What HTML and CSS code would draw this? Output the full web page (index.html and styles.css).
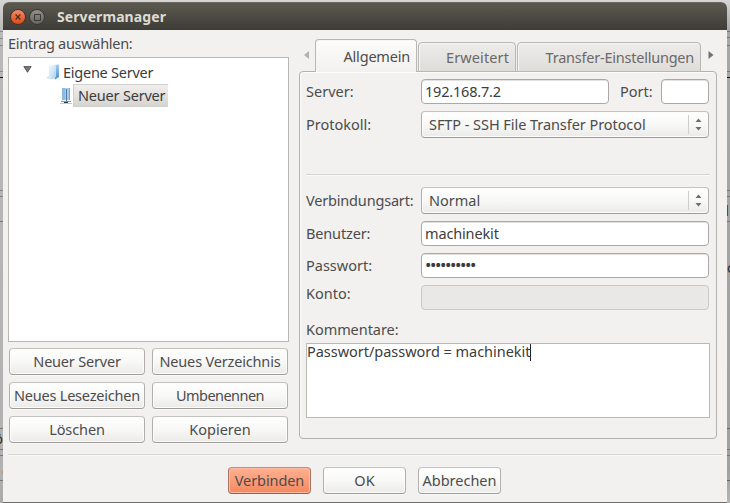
FILE: index.html
```html
<!DOCTYPE html>
<html lang="de">
<head>
<meta charset="utf-8">
<title>Servermanager</title>
<link rel="stylesheet" href="styles.css">
</head>
<body>
<div class="desktop">
  <div class="edge edge-left"><span class="peek peek-o">ö</span></div>
  <section class="window">
    <header class="titlebar">
      <svg class="winbtn" width="16" height="16" viewBox="0 0 16 16">
        <defs><linearGradient id="close" x2="0" y2="1"><stop stop-color="#f58d68"/><stop offset="1" stop-color="#dd4715"/></linearGradient></defs>
        <circle cx="8" cy="8" r="7.5" fill="url(#close)" stroke="#37352f" stroke-width="1"/>
        <path d="M5.6 5.6l4.8 4.8M10.4 5.6l-4.8 4.8" stroke="#50301f" stroke-width="1.4"/>
      </svg>
      <svg class="winbtn" width="16" height="16" viewBox="0 0 16 16">
        <defs><linearGradient id="max" x2="0" y2="1"><stop stop-color="#92908a"/><stop offset="1" stop-color="#66645d"/></linearGradient></defs>
        <circle cx="8" cy="8" r="7.5" fill="url(#max)" stroke="#37352f" stroke-width="1"/>
        <path d="M5.5 5.5h6v6h-6z" fill="none" stroke="#3c3b37"/>
      </svg>
      <h1 class="title">Servermanager</h1>
    </header>
    <main class="content">
      <div class="left">
        <div class="heading">Eintrag auswählen:</div>
        <div class="tree">
          <div class="row">
            <svg class="twist" width="9" height="7" viewBox="0 0 9 7"><path d="M.8.5h7.4L4.5 6.3z" fill="#777" stroke="#4a4a4a" stroke-width=".8"/></svg>
            <svg class="folder" width="14" height="16" viewBox="0 0 14 16">
              <defs><linearGradient id="fold" x2="1" y2="1"><stop stop-color="#f4faff"/><stop offset="1" stop-color="#a9d0ef"/></linearGradient>
              <linearGradient id="side" x2="0" y2="1"><stop stop-color="#a5cdf0"/><stop offset="1" stop-color="#4b8fce"/></linearGradient></defs>
              <path d="M0 14l3-2.500V2.500L7 1v13l-4 1z" fill="#d8e6f0"/>
              <path d="M8 1l5-.5V13l-4 2.500z" fill="url(#side)"/>
              <path d="M3.500 2.500L10 1v11.500L8 15H3.500z" fill="url(#fold)"/>
            </svg>
            <span class="t-own">Eigene Server</span>
          </div>
          <div class="row child">
            <svg class="server" width="12" height="17" viewBox="0 0 12 17">
              <path d="M2 1h8v12H2z" fill="#a9caea"/><path d="M2 1h3v12H2z" fill="#8db8e0"/><path d="M9 1h1v12H9z" fill="#7ca6cf"/>
              <path d="M6.500 2v12" stroke="#4b7bab"/><path d="M1 14.500h10" stroke="#7c98b4"/><path d="M4 15.500h4" stroke="#293d52"/><path d="M0 16.500h12" stroke="#b9cada"/>
            </svg>
            <span class="selected"><span class="t-new">Neuer Server</span></span>
          </div>
        </div>
        <div class="actions">
          <button class="btn t-new">Neuer Server</button>
          <button class="btn t-dir">Neues Verzeichnis</button>
          <button class="btn t-mark">Neues Lesezeichen</button>
          <button class="btn t-ren">Umbenennen</button>
          <button class="btn t-del">Löschen</button>
          <button class="btn">Kopieren</button>
        </div>
      </div>
      <div class="right">
        <nav class="tabs">
          <svg class="scroll" width="5" height="8" viewBox="0 0 5 8"><path d="M5 0v8L0 4z" fill="#b3b1ae"/></svg>
          <div class="tab active"><span class="t-gen">Allgemein</span></div>
          <div class="tab tab-adv"><span class="t-adv">Erweitert</span></div>
          <div class="tab tab-tra"><span class="t-tra">Transfer-Einstellungen</span></div>
          <svg class="scroll next" width="6" height="8" viewBox="0 0 6 8"><path d="M.5 0v8L5.500 4z" fill="#73716e"/></svg>
        </nav>
        <div class="panel">
          <div class="field h25">
            <label>Server:</label><div class="entry host"><span class="t-ip">192.168.7.2</span></div>
            <label class="portlabel">Port:</label><div class="entry port"></div>
          </div>
          <div class="field h27">
            <label>Protokoll:</label>
            <div class="combo"><span class="t-sftp">SFTP - SSH File Transfer Protocol</span><svg class="updown" width="20" height="19" viewBox="0 0 20 19"><path d="M.5 0v19" stroke="#d0cecb"/><path d="M7.500 7h6l-3-3.500zM7.500 12h6l-3 3.500z" fill="#6f6e6b"/></svg></div>
          </div>
          <div class="rule"></div>
          <div class="field h27">
            <label class="t-kind">Verbindungsart:</label>
            <div class="combo"><span>Normal</span><svg class="updown" width="20" height="19" viewBox="0 0 20 19"><path d="M.5 0v19" stroke="#d0cecb"/><path d="M7.500 7h6l-3-3.500zM7.500 12h6l-3 3.500z" fill="#6f6e6b"/></svg></div>
          </div>
          <div class="field h25"><label class="t-user">Benutzer:</label><div class="entry"><span class="t-mk">machinekit</span></div></div>
          <div class="field h25"><label>Passwort:</label><div class="entry"><span class="dots">••••••••••</span></div></div>
          <div class="field h25"><label class="account">Konto:</label><div class="entry disabled"></div></div>
          <div class="comlabel">Kommentare:</div>
          <div class="comment"><span class="t-note">Passwort/password = machinekit</span><i class="caret"></i></div>
        </div>
      </div>
    </main>
    <footer class="footer">
      <button class="btn primary t-conn">Verbinden</button>
      <button class="btn">OK</button>
      <button class="btn">Abbrechen</button>
    </footer>
  </section>
  <div class="edge edge-right"><span class="peek peek-d">d</span><span class="peek peek-c">o</span></div>
</div>
</body>
</html>
```
FILE: styles.css
```css
* { box-sizing: border-box; }
body { margin: 0; font: 14.5px/18px "Noto Sans", "Open Sans", sans-serif; color: #4c4c4c; white-space: nowrap; }
svg { display: block; flex: none; }
.desktop { display: flex; width: 730px; height: 503px; overflow: hidden; background: linear-gradient(#d5d5d5, #a8a8a8 30px, #999 470px, #6f6e6c 502px); }
.edge { position: relative; width: 3px; height: 503px; overflow: hidden; flex: none; }
.edge-left { background:
  linear-gradient(#898989, #898989) 0 31px / 3px 1px no-repeat,
  linear-gradient(#898989, #898989) 0 38px / 3px 1px no-repeat,
  linear-gradient(#898989, #898989) 0 45px / 3px 1px no-repeat,
  linear-gradient(#898989, #898989) 0 71px / 3px 1px no-repeat,
  linear-gradient(#111, #111) 0 77px / 3px 1px no-repeat,
  linear-gradient(#858585, #858585) 0 190px / 3px 1px no-repeat,
  linear-gradient(#858585, #858585) 0 196px / 3px 1px no-repeat,
  linear-gradient(#777, #777) 0 221px / 3px 1px no-repeat,
  linear-gradient(#777, #777) 0 428px / 3px 1px no-repeat,
  linear-gradient(#777, #777) 0 449px / 3px 1px no-repeat,
  linear-gradient(#777, #777) 0 455px / 3px 1px no-repeat,
  linear-gradient(#c39a4a, #c39a4a) 2px 471px / 1px 3px no-repeat,
  linear-gradient(#777, #777) 0 480px / 3px 1px no-repeat,
  linear-gradient(#d5d5d5, #b9b9b9 30px, #b1b1b1 470px, #aaa); }
.edge-right { background:
  linear-gradient(#777, #777) 0 31px / 3px 1px no-repeat,
  linear-gradient(#777, #777) 0 37px / 3px 1px no-repeat,
  linear-gradient(#777, #777) 0 45px / 3px 1px no-repeat,
  linear-gradient(#777, #777) 0 71px / 3px 1px no-repeat,
  linear-gradient(#111, #111) 0 77px / 3px 1px no-repeat,
  linear-gradient(#777, #777) 0 190px / 3px 1px no-repeat,
  linear-gradient(#777, #777) 0 196px / 3px 1px no-repeat,
  linear-gradient(#777, #777) 0 221px / 3px 1px no-repeat,
  linear-gradient(#666, #666) 0 428px / 3px 1px no-repeat,
  linear-gradient(#777, #777) 0 449px / 3px 1px no-repeat,
  linear-gradient(#777, #777) 0 455px / 3px 1px no-repeat,
  linear-gradient(#666, #666) 0 480px / 3px 1px no-repeat,
  linear-gradient(#d5d5d5, #a7a7a7 30px, #a0a0a0 470px, #b5b5b5); }
.peek { position: absolute; color: #333; }
.peek-o { right: 0; top: 429px; }
.peek-d { right: 1px; top: 201px; }
.peek-c { left: 0; top: 258px; }
.window { width: 724px; height: 500px; margin-top: 2px; background: #f2f1f0; border-radius: 6px 6px 0 0; display: flex; flex-direction: column; overflow: hidden; }
.titlebar { height: 28px; padding: 1px 0 0 7px; display: flex; align-items: center; background: linear-gradient(#5b594f, #3d3c37); border-top: 1px solid #6a685d; }
.winbtn { margin-right: 3px; }
.title { margin: 0 0 0 9px; font-size: 14px; line-height: 20px; font-weight: 700; letter-spacing: .08px; color: #dfdbd2; }
.content { display: flex; height: 424px; padding: 4px 10px 0 5px; }
.left { width: 281px; }
.heading { height: 23px; letter-spacing: -.3px; }
.tree { height: 285px; border: 1px solid #b9b7b3; background: #fff; padding: 2px 0 0 14px; color: #3c3c3c; }
.row { display: flex; height: 23px; align-items: center; }
.row + .row { margin-top: 1px; }
.twist { margin: -5px 14px 0 0; }
.folder { margin-right: 3px; }
.child { padding-left: 37px; }
.selected { margin-left: 1px; width: 95px; height: 23px; padding: 1px 0 0 4px; border: 1px solid #d2d0cd; border-right: 0; background: linear-gradient(#f0efee, #d6d4d1); }
.actions { display: grid; grid-template-columns: 136px 136px; gap: 7px; padding: 6px 1px 0; }
.btn { height: 27px; padding: 0 0 1px; font-family: inherit; font-size: inherit; line-height: 18px; color: #4c4c4c; border: 1px solid; border-color: #c5c3c0 #b1afac #9e9c99 #b1afac; border-radius: 4px; background: linear-gradient(#fff, #f8f8f7 50%, #ebeae8); box-shadow: inset 0 0 0 1px #fcfcfb, 0 1px #f9f9f8; white-space: nowrap; }
.right { width: 418px; margin-left: 10px; }
.tabs { position: relative; z-index: 1; display: flex; align-items: flex-end; height: 38px; padding-left: 5px; margin-bottom: -1px; }
.scroll { margin-bottom: 13px; }
.next { margin-left: 7px; }
.tab { height: 30px; border: 1px solid #b9b7b3; border-radius: 4px 4px 0 0; background: linear-gradient(#edecea, #dfddda); color: #6b6967; text-align: right; padding: 5px 6px 0 0; box-shadow: inset 1px 1px #f7f6f5; }
.active { width: 102px; height: 33px; margin-left: 6px; border-bottom: 0; background: linear-gradient(#fcfcfb, #f2f1f0); color: #4c4c4c; padding-top: 7px; }
.tab-adv { width: 98px; margin-left: 1px; }
.tab-tra { width: 184px; margin-left: 1px; }
.panel { height: 368px; border: 1px solid #b3b1ae; border-radius: 4px; padding: 7px 6px 0; box-shadow: inset 1px 1px #fbfbfa; }
.field { display: flex; align-items: center; padding: 0 1px 0 0; }
.field label { padding-bottom: 2px; }
.field label:first-child { width: 115px; flex: none; }
.h25 { height: 25px; margin-bottom: 7px; }
.h27 { height: 27px; margin-bottom: 7px; }
.entry { flex: 1; height: 25px; border: 1px solid #aaa8a5; border-radius: 4px; background: #fff; box-shadow: inset 0 1px #e3e2e0; padding: 2px 3px 0; color: #3c3c3c; }
.host { flex: none; width: 188px; }
.portlabel { width: 41px; margin-left: 11px; }
.disabled { background: #e9e8e7; border-color: #cbc9c6; box-shadow: none; }
.combo { flex: 1; height: 27px; display: flex; align-items: center; justify-content: space-between; padding-left: 7px; border: 1px solid; border-color: #c5c3c0 #b1afac #9e9c99 #b1afac; border-radius: 4px; background: linear-gradient(#fff, #f8f8f7 50%, #ebeae8); box-shadow: inset 0 0 0 1px #fcfcfb; }
.combo span { padding-bottom: 2px; }
.rule { height: 2px; margin: 36px 0 11px; background: #d7d5d2; border-bottom: 1px solid #f9f9f8; }
.dots { display: block; font-size: 17px; letter-spacing: -1.4px; }
.field .account { padding-bottom: 9px; }
.comlabel { height: 23px; margin-top: 10px; letter-spacing: -.06px; }
.comment { height: 75px; border: 1px solid #bab8b4; background: #fff; color: #3c3c3c; display: flex; line-height: 17px; }
.comment span { margin-top: -1px; }
.caret { width: 1px; height: 17px; background: #222; }
.footer { height: 48px; margin: 0 5px; border-top: 1px solid #d7d5d2; box-shadow: inset 0 1px #f9f9f8; padding: 12px 0 0 220px; display: flex; gap: 12px; }
.footer .btn { width: 83px; }
.footer .primary { background: linear-gradient(#ffb092, #f4895f); border-color: #c98a72 #a77561 #946350; box-shadow: inset 0 0 0 1px #ffba9f; }
.t-own { letter-spacing: -.25px; }
.t-new { letter-spacing: -.2px; }
.t-dir { letter-spacing: -.17px; }
.t-mark { letter-spacing: -.2px; }
.t-ren { letter-spacing: -.55px; }
.t-del { letter-spacing: -.1px; }
.t-gen { letter-spacing: -.2px; }
.t-adv { letter-spacing: .1px; }
.t-tra { letter-spacing: -.23px; }
.t-ip { letter-spacing: -.2px; }
.t-sftp { letter-spacing: -.06px; }
.t-kind { letter-spacing: -.18px; }
.t-user { letter-spacing: -.15px; }
.t-mk { letter-spacing: -.15px; }
.t-note { letter-spacing: -.03px; }
.t-conn { letter-spacing: -.1px; }
```
